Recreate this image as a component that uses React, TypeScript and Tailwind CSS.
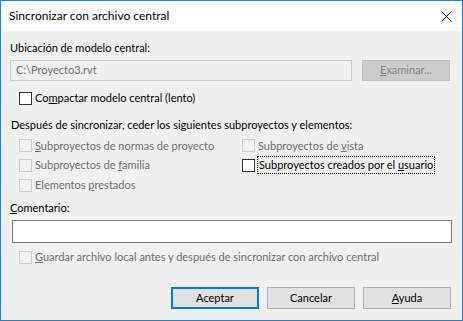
import React from 'react'

const font = { fontFamily: 'Lato, "Liberation Sans", Arial, sans-serif' }

function Box({ disabled }: { disabled?: boolean }) {
  return (
    <span
      className={
        disabled
          ? 'block w-[13px] h-[13px] shrink-0 border border-[#cccccc] bg-[#f0f0f0]'
          : 'block w-[13px] h-[13px] shrink-0 border border-[#333333] bg-white'
      }
    />
  )
}

function Check({
  children,
  disabled,
  focused,
}: {
  children: React.ReactNode
  disabled?: boolean
  focused?: boolean
}) {
  return (
    <div className="flex items-center gap-[3px] h-full">
      <Box disabled={disabled} />
      <span
        className={
          (disabled ? 'text-[#6d6d6d] ' : 'text-black ') +
          (focused ? 'outline outline-1 outline-dotted outline-black px-[1px] leading-[16px]' : 'leading-[16px]')
        }
      >
        {children}
      </span>
    </div>
  )
}

export default function App() {
  return (
    <div
      className="w-[463px] h-[321px] border border-[#1883d7] bg-[#f0f0f0] flex flex-col text-[11px] text-black"
      style={font}
    >
      {/* title bar */}
      <div className="h-[30px] bg-white flex items-center justify-between pl-[8px] pr-[10px] shrink-0">
        <span className="text-[12px]">Sincronizar con archivo central</span>
        <svg width="11" height="11" viewBox="0 0 11 11">
          <path d="M0.5 0.5 L10.5 10.5 M10.5 0.5 L0.5 10.5" stroke="#000" strokeWidth="1" />
        </svg>
      </div>

      <div className="flex flex-col pl-[9px]">
        <div className="mt-[9px] leading-[16px]">Ubicación de modelo central:</div>

        <div className="mt-[4px] flex gap-[10px]">
          <div className="w-[342px] h-[21px] border border-[#cccccc] bg-[#f0f0f0] text-[#6d6d6d] flex items-center pl-[5px]">
            C:\Proyecto3.rvt
          </div>
          <div className="w-[88px] h-[21px] border border-[#bfbfbf] bg-[#cccccc] text-[#838383] flex items-center justify-center">
            <span>
              <u className="underline-offset-1">E</u>xaminar...
            </span>
          </div>
        </div>

        <div className="mt-[9px] ml-[9px] h-[16px]">
          <Check>
            Co<u className="underline-offset-1">m</u>pactar modelo central (lento)
          </Check>
        </div>

        <div className="mt-[11px] ml-[1px] leading-[16px]">
          Después de sincronizar, ceder los siguientes subproyectos y elementos:
        </div>

        <div className="mt-[3px] ml-[9px] grid grid-cols-[223px_1fr] grid-rows-[19px_20px_20px]">
          <Check disabled>
            <u className="underline-offset-1">S</u>ubproyectos de normas de proyecto
          </Check>
          <Check disabled>
            Subproyectos de <u className="underline-offset-1">v</u>ista
          </Check>
          <Check disabled>
            Subproyectos de <u className="underline-offset-1">f</u>amilia
          </Check>
          <Check focused>
            Subproyectos creados por el <u className="underline-offset-1">u</u>suario
          </Check>
          <Check disabled>
            Elementos <u className="underline-offset-1">p</u>restados
          </Check>
          <div />
        </div>

        <div className="mt-[5px] leading-[16px]">
          <u className="underline-offset-1">C</u>omentario:
        </div>

        <div className="mt-[4px] ml-[2px] w-[440px] h-[23px] border border-[#7a7a7a] bg-white" />

        <div className="mt-[6px] ml-[9px] h-[16px]">
          <Check disabled>
            <u className="underline-offset-1">G</u>uardar archivo local antes y después de sincronizar con archivo central
          </Check>
        </div>

        <div className="mt-[22px] flex justify-end gap-[8px] pr-[11px]">
          <button className="w-[88px] h-[22px] border-2 border-[#0078d7] bg-[#e1e1e1] flex items-center justify-center">
            Aceptar
          </button>
          <button className="w-[88px] h-[22px] border border-[#adadad] bg-[#e1e1e1] flex items-center justify-center">
            Cancelar
          </button>
          <button className="w-[88px] h-[22px] border border-[#adadad] bg-[#e1e1e1] flex items-center justify-center">
            <span>
              <u className="underline-offset-1">A</u>yuda
            </span>
          </button>
        </div>
      </div>
    </div>
  )
}
